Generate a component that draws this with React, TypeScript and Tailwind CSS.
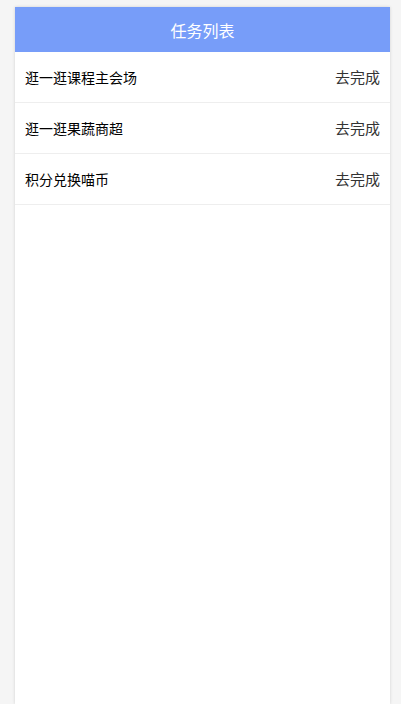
import React from 'react';

// 任务列表
const TASKS = ['逛一逛课程主会场', '逛一逛果蔬商超', '积分兑换喵币'];

const App: React.FC = () => {
  return (
    <div
      className="min-h-[704px] bg-[#f5f5f5] pt-[7px] px-[15px]"
      style={{ fontFamily: '"Microsoft YaHei", "Noto Sans CJK SC", sans-serif' }}
    >
      <div className="w-[375px] min-h-[697px] bg-white shadow-[0_0_3px_rgba(0,0,0,0.15)]">
        {/* 标题栏 */}
        <div className="h-[45px] bg-[#779df9] flex items-center justify-center text-white text-[16px]">
          任务列表
        </div>

        {/* 任务行 */}
        {TASKS.map(task => (
          <div
            key={task}
            className="h-[51px] flex items-center justify-between pl-[10px] pr-[10px] border-b border-[#eeeeee]"
          >
            <span className="text-[14px] text-black">{task}</span>
            <span className="text-[15px] text-[#333333]">去完成</span>
          </div>
        ))}
      </div>
    </div>
  );
};

export default App;
